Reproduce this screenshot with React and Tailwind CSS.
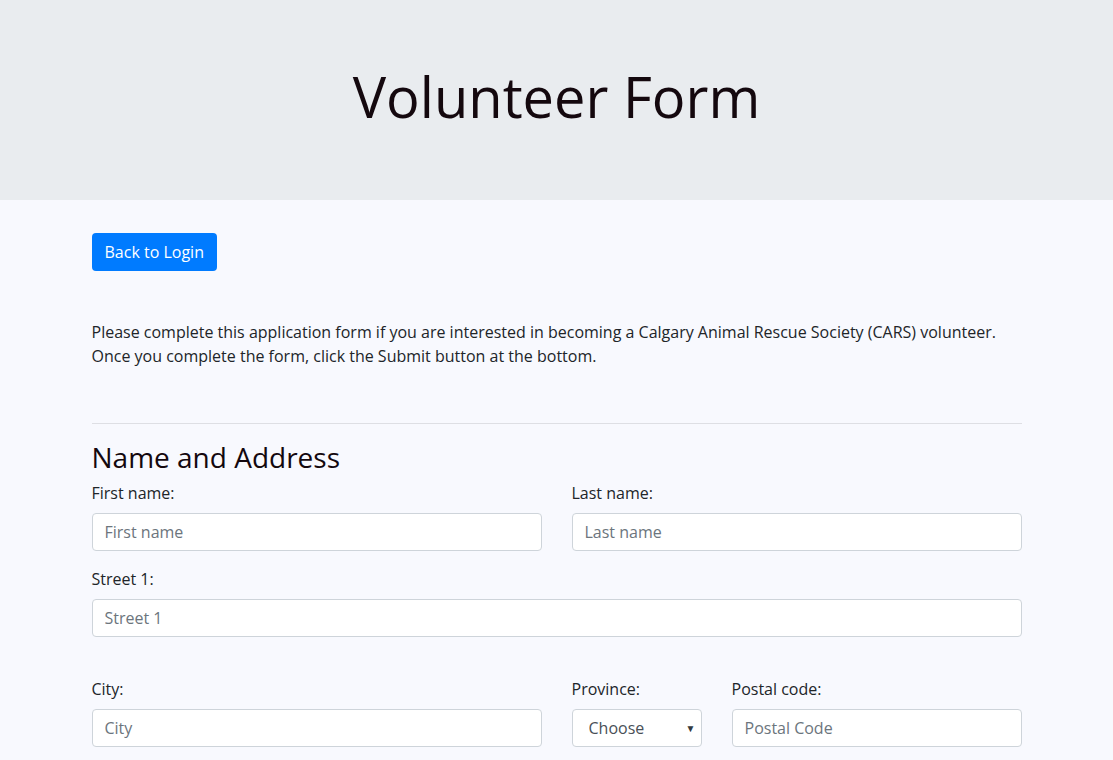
import React from "react";

const Field = ({ label, placeholder, className = "" }) => (
  <div className={className}>
    <label className="block mb-2 leading-6">{label}</label>
    <input
      type="text"
      placeholder={placeholder}
      className="block w-full h-[38px] px-3 bg-white border border-[#ced4da] rounded-[4px] text-[#495057] placeholder:text-[#6c757d] outline-none"
    />
  </div>
);

export default function App() {
  return (
    <div className="min-h-screen bg-[#f8f9fe] text-[#212529] text-base font-['Open_Sans',sans-serif]">
      {/* Header */}
      <div className="h-[200px] bg-[#e9ecef] flex items-center justify-center pb-[6px]">
        <h1 className="text-[56px] font-normal leading-[1.2] text-[#14080e]">
          Volunteer Form
        </h1>
      </div>

      <div className="w-[930px] mx-auto pt-[33px] pb-10">
        <button className="h-[38px] px-[13px] bg-[#007bff] text-white rounded-[4px] leading-6">
          Back to Login
        </button>

        <p className="mt-[49px] leading-6">
          Please complete this application form if you are interested in becoming a Calgary Animal Rescue Society (CARS) volunteer.
          <br />
          Once you complete the form, click the Submit button at the bottom.
        </p>

        <hr className="mt-[55px] mb-[17px] border-t border-[rgba(0,0,0,0.1)]" />

        <h3 className="text-[28px] leading-[1.2] mb-[6px] text-[#14080e]">Name and Address</h3>

        <div className="grid grid-cols-2 gap-x-[30px]">
          <Field label="First name:" placeholder="First name" />
          <Field label="Last name:" placeholder="Last name" />
        </div>

        <Field label="Street 1:" placeholder="Street 1" className="mt-4" />

        <div className="mt-[40px] flex gap-x-[30px]">
          <Field label="City:" placeholder="City" className="w-[450px]" />
          <div className="w-[130px]">
            <label className="block mb-2 leading-6">Province:</label>
            <div className="relative">
              <select className="block w-full h-[38px] pl-4 pr-7 bg-white border border-[#ced4da] rounded-[4px] text-[#495057] appearance-none outline-none">
                <option>Choose</option>
              </select>
              <span className="absolute right-[6px] top-1/2 -translate-y-1/2 text-[10px] text-[#343a40] pointer-events-none">
                ▼
              </span>
            </div>
          </div>
          <Field label="Postal code:" placeholder="Postal Code" className="w-[290px]" />
        </div>
      </div>
    </div>
  );
}
